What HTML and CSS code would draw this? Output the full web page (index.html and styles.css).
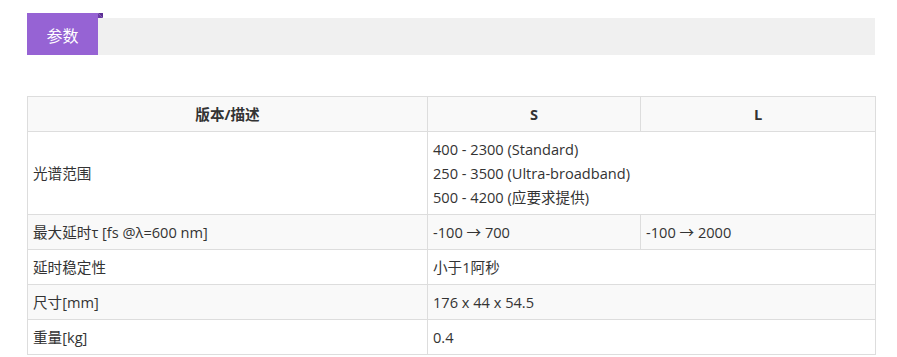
FILE: index.html
```html
<!DOCTYPE html>
<html lang="zh">
<head>
<meta charset="utf-8">
<link rel="stylesheet" href="styles.css">
</head>
<body>
<div class="wrap">
  <div class="title-bar">
    <div class="tab">参数<span class="fold"></span></div>
  </div>
  <table class="spec">
    <colgroup>
      <col class="c1"><col class="c2"><col class="c3">
    </colgroup>
    <thead>
      <tr><th>版本/描述</th><th>S</th><th>L</th></tr>
    </thead>
    <tbody>
      <tr><td>光谱范围</td><td colspan="2">400 - 2300 (Standard)<br>250 - 3500 (Ultra-broadband)<br>500 - 4200 (应要求提供)</td></tr>
      <tr class="alt"><td>最大延时τ [fs @λ=600 nm]</td><td>-100 → 700</td><td>-100 → 2000</td></tr>
      <tr><td>延时稳定性</td><td colspan="2">小于1阿秒</td></tr>
      <tr class="alt"><td>尺寸[mm]</td><td colspan="2">176 x 44 x 54.5</td></tr>
      <tr><td>重量[kg]</td><td colspan="2">0.4</td></tr>
    </tbody>
  </table>
</div>
</body>
</html>
```
FILE: styles.css
```css
html, body { margin: 0; padding: 0; background: #fff; }
body {
  font-family: "Open Sans", "Noto Sans CJK SC", sans-serif;
  color: #333;
  font-size: 14.6px;
}
.wrap { width: 848px; padding: 13px 0 0 27px; }
.title-bar {
  height: 42px;
  display: flex;
  align-items: flex-end;
  background: linear-gradient(#fff 0, #fff 5px, #f0f0f0 5px);
}
.tab {
  position: relative;
  width: 71px;
  height: 42px;
  background: #9663d4;
  color: #fff;
  font-size: 16px;
  display: flex;
  align-items: center;
  justify-content: center;
  padding-top: 2px;
  box-sizing: border-box;
}
.fold {
  position: absolute;
  top: 0;
  right: -5px;
  width: 0; height: 0;
  border-style: solid;
  border-width: 0 5px 5px 0;
  border-color: transparent transparent #6a3aa6 transparent;
}
.fold::before {
  content: "";
  position: absolute;
  left: 0; top: 0;
  border-style: solid;
  border-width: 5px 0 0 5px;
  border-color: #5c2f95 transparent transparent transparent;
}
.spec {
  margin-top: 41px;
  width: 848px;
  border-collapse: collapse;
  table-layout: fixed;
}
.c1 { width: 400px; }
.c2 { width: 213px; }
.c3 { width: 235px; }
.spec th, .spec td {
  border: 1px solid #ddd;
  padding: 5px 5px;
  height: 24px;
  line-height: 24px;
  text-align: left;
  vertical-align: middle;
}
.spec th { text-align: center; font-weight: bold; background: #f9f9f9; }
.spec tr.alt td { background: #f9f9f9; }
```
